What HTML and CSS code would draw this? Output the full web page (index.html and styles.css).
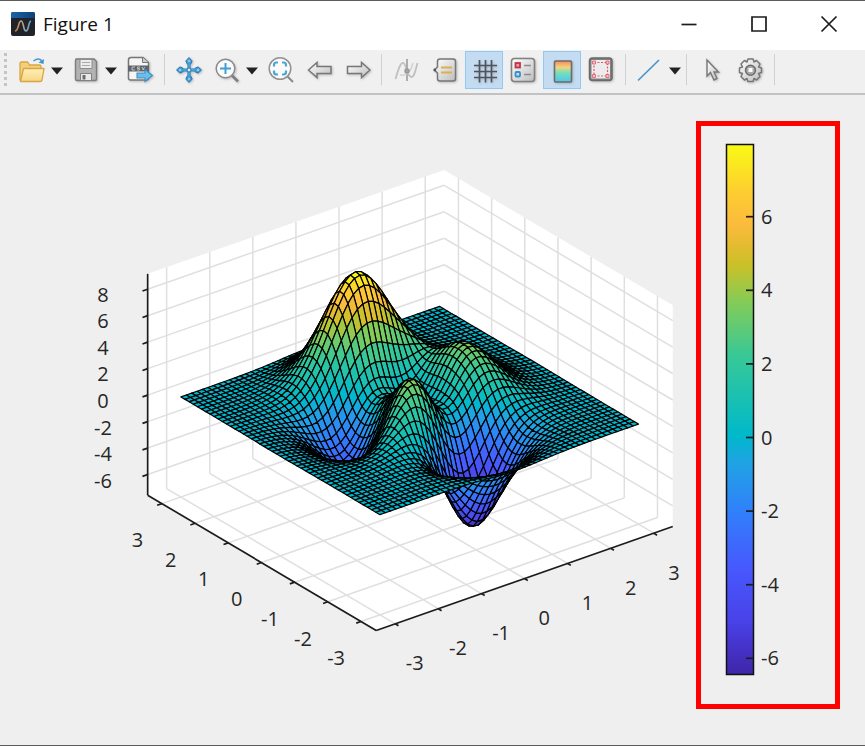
FILE: index.html
```html
<!DOCTYPE html>
<html lang="en">
<head>
<meta charset="utf-8">
<title>Figure 1</title>
<link rel="stylesheet" href="styles.css">
</head>
<body>
<div class="window">
  <header class="titlebar">
    <svg class="app-icon" viewBox="0 0 24 24" aria-hidden="true">
      <defs><linearGradient id="cap" x1="0" x2="1"><stop offset="0" stop-color="#1e64a8"/><stop offset="1" stop-color="#0c4276"/></linearGradient>
      <linearGradient id="wave" x1="0" x2="1"><stop offset="0" stop-color="#c8773a"/><stop offset=".45" stop-color="#b9a58a"/><stop offset="1" stop-color="#5aa3d8"/></linearGradient></defs>
      <rect width="24" height="24" rx="2" fill="#20242a"/>
      <path d="M0 6V2a2 2 0 0 1 2-2h20a2 2 0 0 1 2 2v4z" fill="url(#cap)"/>
      <path d="M4 19c4 0 3-10 6-10s2 10 5 10 2-9 5-10" fill="none" stroke="url(#wave)" stroke-width="1.6"/>
    </svg>
    <h1 class="title">Figure 1</h1>
    <div class="controls">
      <button class="control" aria-label="Minimize"><svg viewBox="0 0 18 18"><path d="M1.500 9.500h15"/></svg></button>
      <button class="control" aria-label="Maximize"><svg viewBox="0 0 18 18"><path d="M2 2h14v14H2z"/></svg></button>
      <button class="control" aria-label="Close"><svg viewBox="0 0 18 18"><path d="M1.500 1.500l15 15M16.500 1.500l-15 15"/></svg></button>
    </div>
  </header>

  <nav class="toolbar" aria-label="Figure tools">
    <span class="grip"></span>
    <div class="group">
      <div class="split">
        <button class="tool" aria-label="Open"><svg viewBox="0 0 28 28">
          <defs><linearGradient id="fold" x1="0" y1="0" x2="0" y2="1"><stop offset="0" stop-color="#fff0b8"/><stop offset="1" stop-color="#f7d683"/></linearGradient></defs>
          <path d="M2 24.500V7.500q0-1.500 1.500-1.500h6l2 3h10q1.500 0 1.500 1.500V13" fill="#f3cf7c" stroke="#d9a544" stroke-width="1.300"/>
          <path d="M2.500 25.500L5.500 12.500h20.500L24 24q-.3 1.500-1.800 1.500z" fill="url(#fold)" stroke="#d9a544" stroke-width="1.300" stroke-linejoin="round"/>
          <path d="M15.500 5q5-4 8.500 0" fill="none" stroke="#4a9bcd" stroke-width="1.600"/><path d="M26 3l-.5 5-5-1.500z" fill="#3f94c9"/>
        </svg></button>
        <button class="caret" aria-label="Open options"></button>
      </div>
      <div class="split">
        <button class="tool" aria-label="Save"><svg class="shaded" viewBox="0 0 28 28">
          <path d="M4.500 3h17.500l2.500 2.500v17.500q0 1.500-1.500 1.500h-18q-1.500 0-1.500-1.500V4.500q0-1.500 1-1.500z" fill="#b2b2b2" stroke="#7c7c7c" stroke-width="1.400"/>
          <path d="M8 3.500h12v9H8z" fill="#ececec" stroke="#8d8d8d"/><path d="M10 6.500h8M10 9.500h8" stroke="#aaa"/>
          <path d="M8.500 17.500h11v7h-11z" fill="#e9e9e9" stroke="#808080"/><path d="M10.500 19h3v4.500h-3z" fill="#6c6c6c"/>
        </svg></button>
        <button class="caret" aria-label="Save options"></button>
      </div>
      <button class="tool" aria-label="Export"><svg class="shaded" viewBox="0 0 28 28">
        <path d="M2.500 22V4q0-2.500 2.500-2.500h12l5.500 5V22q0 2-2 2h-16q-2 0-2-2z" fill="#f5f5f5" stroke="#777" stroke-width="1.500"/>
        <path d="M16.500 1.500v5h6" fill="#ccc" stroke="#777"/><path d="M2 9.500h21v6H2z" fill="#5f6468"/>
        <path d="M9 11H6v3h3M14 11h-2.500v1.500h2V14H11M16 11l1.200 3 1.300-3" fill="none" stroke="#ccc" stroke-width=".9"/>
        <path d="M11 17h8v-3.500l7.500 6-7.500 6V22h-8z" fill="#6dbcec" stroke="#3f8ec3" stroke-width="1.100"/>
      </svg></button>
    </div>
    <span class="sep"></span>
    <div class="group">
      <button class="tool" aria-label="Pan"><svg class="shaded" viewBox="0 0 28 28">
        <path d="M14 5v18M5 14h18" stroke="#2f80b8" stroke-width="3.200"/>
        <path d="M14 1.500l3.200 3.500-1.500 3h-3.400l-1.500-3zM14 26.500l3.200-3.500-1.500-3h-3.400l-1.500 3zM1.500 14l3.500-3.200 3 1.500v3.400l-3 1.500zM26.500 14l-3.500-3.200-3 1.500v3.400l3 1.500z" fill="#4a9fd6" stroke="#2877b0"/>
        <path d="M14 7v14M7 14h14" stroke="#4ba6df" stroke-width="1.600"/><circle cx="14" cy="14" r="2" fill="#d8ecf8" stroke="#2877b0"/>
        <path d="M14 4v2M14 22v2M4 14h2M22 14h2" stroke="#a9dbf7" stroke-width="1.300"/>
      </svg></button>
      <div class="split">
        <button class="tool" aria-label="Zoom in"><svg class="shaded" viewBox="0 0 28 28">
          <path d="M18.500 19l6.500 6.500" stroke="#808080" stroke-width="2.600"/><circle cx="12.500" cy="12.500" r="9.300" fill="#fafafa" stroke="#8b8b8b" stroke-width="1.500"/>
          <path d="M12.500 7v11M7 12.500h11" stroke="#3f9fd2" stroke-width="2"/>
        </svg></button>
        <button class="caret" aria-label="Zoom options"></button>
      </div>
      <button class="tool" aria-label="Fit to view"><svg viewBox="0 0 28 28">
        <path d="M20 20l6 6" stroke="#888" stroke-width="1.900"/><circle cx="13" cy="12.500" r="10.800" fill="#fafafa" stroke="#929292" stroke-width="1.500"/>
        <path d="M7 10.500V9q0-2.500 2.500-2.500h1.500M15 6.500h1.500q2.500 0 2.500 2.500v1.500M19 14.500v1.500q0 2.500-2.500 2.500H15M11 18.500H9.500Q7 18.500 7 16v-1.500" fill="none" stroke="#4aa5d3" stroke-width="2.200"/>
      </svg></button>
      <button class="tool" aria-label="Back"><svg class="shaded" viewBox="0 0 28 28">
        <defs><linearGradient id="metal" x1="0" y1="0" x2="1" y2="1"><stop offset="0" stop-color="#fff"/><stop offset="1" stop-color="#bdbdbd"/></linearGradient></defs>
        <path d="M3.500 14l8.500-7.500v4H26v7H12v4z" fill="url(#metal)" stroke="#777" stroke-width="1.500"/></svg></button>
      <button class="tool" aria-label="Forward"><svg class="shaded" viewBox="0 0 28 28"><path d="M27 14l-8.500-7.500v4H4.500v7h14v4z" fill="url(#metal)" stroke="#777" stroke-width="1.500"/></svg></button>
    </div>
    <span class="sep"></span>
    <div class="group spaced">
      <button class="tool" aria-label="Brush"><svg viewBox="0 0 28 28" fill="none" stroke="#c0c0c0" stroke-width="1.800">
        <path d="M3.500 23c3-10 5-17 8-16s3 14 8 14c3 0 4-7 6-14"/><path d="M15 3v22" stroke="#a5a5a5"/><path d="M8 19c6 1 11-3 13-12" stroke="#d2d2d2" stroke-width="1.500"/><circle cx="15" cy="15" r="1.800" stroke="#999" fill="#aaa"/></svg></button>
      <button class="tool" aria-label="Data tip"><svg class="shaded" viewBox="0 0 28 28">
        <path d="M9 3h13q2.500 0 2.500 2.500v17q0 2.500-2.500 2.500H9q-2.500 0-2.500-2.500V17L3.500 14l3-3V5.500Q6.500 3 9 3z" fill="url(#metal)" stroke="#777" stroke-width="1.500"/>
        <path d="M10 11.500h11M10 16.500h11" stroke="#dcb04c" stroke-width="1.800"/><circle cx="3.800" cy="14" r="1.400" fill="#555"/></svg></button>
      <button class="tool selected" aria-label="Grid" aria-pressed="true"><svg class="shaded" viewBox="0 0 28 28"><path d="M9.500 4v22.500M15.500 4v22.500M21.500 4v22.500M4 9.500h23M4 15.500h23M4 21.500h23" stroke="#4d545c" stroke-width="1.700"/></svg></button>
      <button class="tool" aria-label="Legend"><svg class="shaded" viewBox="0 0 28 28">
        <rect x="2.500" y="2.500" width="23" height="23" rx="3" fill="url(#metal)" stroke="#808080" stroke-width="1.600"/>
        <rect x="6.500" y="7" width="4.500" height="4.500" fill="#e8a0a8" stroke="#c03546" stroke-width="1.800"/><rect x="6.500" y="16" width="4.500" height="4.500" rx="1" fill="#bce3fa" stroke="#3290cb" stroke-width="1.800"/>
        <path d="M15 9.500h7M15 18.500h7" stroke="#8c8c8c" stroke-width="1.600"/></svg></button>
      <button class="tool selected" aria-label="Colorbar" aria-pressed="true"><svg class="shaded" viewBox="0 0 28 28">
        <defs><linearGradient id="cb" x1="0" y1="0" x2="0" y2="1"><stop offset="0" stop-color="#f48c5c"/><stop offset=".3" stop-color="#f5d27f"/><stop offset=".55" stop-color="#77dfb8"/><stop offset="1" stop-color="#4fc5ec"/></linearGradient></defs>
        <rect x="6.500" y="5" width="17" height="21" rx="1" fill="url(#cb)" stroke="#6c6c6c" stroke-width="1.600"/></svg></button>
      <button class="tool" aria-label="Plot tools"><svg class="shaded" viewBox="0 0 28 28">
        <rect x="2.500" y="2" width="22.500" height="22.500" rx="3" fill="#808080" stroke="#6a6a6a" stroke-width="1.500"/><rect x="4.500" y="4" width="18.500" height="18.500" fill="#ececec"/>
        <rect x="7" y="6.500" width="13.500" height="13.500" fill="none" stroke="#e05a6b" stroke-width="1.200" stroke-dasharray="2 1.500"/>
        <path d="M5.500 5h3v3h-3zM19 5h3v3h-3zM5.500 18.500h3v3h-3zM19 18.500h3v3h-3z" fill="#f5c4ca" stroke="#de5768" stroke-width=".8"/></svg></button>
    </div>
    <span class="sep"></span>
    <div class="group">
      <div class="split">
        <button class="tool" aria-label="Insert line"><svg viewBox="0 0 28 28"><path d="M2 24.500L23 4" stroke="#4a94c8" stroke-width="1.700"/></svg></button>
        <button class="caret" aria-label="Line options"></button>
      </div>
    </div>
    <span class="sep"></span>
    <div class="group spaced">
      <button class="tool" aria-label="Select"><svg class="shaded" viewBox="0 0 28 28"><path d="M10 4v16l3.500-3.500 3.500 7.500 3-1.500-3-6.500h4.500z" fill="url(#metal)" stroke="#777" stroke-width="1.400"/></svg></button>
      <button class="tool" aria-label="Settings"><svg class="shaded" viewBox="0 0 28 28">
        <path d="M12 3h5l1 3 2.500-1.500 3.500 3.500-1.500 3 3 1v4.500l-3 1 1.500 3-3.500 3.500L18 22.500l-1 3h-5l-1-3L8.500 24 5 20.500l1.500-3-3-1V12l3-1L5 8l3.500-3.500L11 6z" fill="url(#metal)" stroke="#777" stroke-width="1.500" stroke-linejoin="round"/>
        <circle cx="14.500" cy="14.200" r="5" fill="#a9a9a9" stroke="#6c6c6c" stroke-width="1.500"/><rect x="12.500" y="12" width="4" height="4" fill="#fff"/></svg></button>
    </div>
    <span class="sep"></span>
  </nav>

  <main class="figure">
    <svg class="axes" viewBox="0 95 696 649" role="img" aria-label="Surface plot of peaks">
      <g id="walls"></g>
      <g id="grid"></g>
      <g id="axis"></g>
      <g id="surface"></g>
      <g id="labels"></g>
    </svg>
    <aside class="legend">
      <svg class="colorbar" viewBox="0 0 134 578" role="img" aria-label="Color scale">
        <defs><linearGradient id="parula" x1="0" y1="1" x2="0" y2="0"></linearGradient></defs>
        <rect x="25.500" y="18.500" width="27" height="530" fill="url(#parula)" stroke="#111" stroke-width="1.500"/>
        <g id="bar-ticks"></g>
      </svg>
    </aside>
  </main>
</div>
<script src="plot.js"></script>
</body>
</html>
```
FILE: styles.css
```css
* { box-sizing: border-box; }

body {
  margin: 0;
  background: #f0f0f0;
  color: #222;
  font-family: "Open Sans", "Noto Sans", sans-serif;
}

.window {
  display: flex;
  flex-direction: column;
  min-height: 100vh;
  border-top: 1px solid #5c5c5c;
  border-bottom: 1px solid #5c5c5c;
}

.titlebar {
  display: flex;
  align-items: center;
  height: 49px;
  padding: 0 1px 4px 11px;
  background: #fff;
}

.app-icon { width: 24px; height: 24px; }

.title {
  flex: 1;
  margin: 0 0 0 8px;
  font-size: 19px;
  font-weight: 400;
  line-height: 24px;
  color: #111;
}

.controls { display: flex; }

button {
  padding: 0;
  border: 0;
  background: none;
}

.control {
  display: grid;
  place-items: center;
  width: 70px;
  height: 44px;
}

.control svg {
  width: 18px;
  height: 18px;
  fill: none;
  stroke: #1c1c1c;
  stroke-width: 1.700;
}

.toolbar {
  display: flex;
  align-items: center;
  height: 45px;
  padding: 0 0 4px 4px;
  border-bottom: 2px solid #c2c2c2;
}

.grip {
  width: 3px;
  height: 34px;
  margin-right: 6px;
  background: repeating-linear-gradient(#c4c4c4 0 3px, transparent 3px 6px);
}

.group, .split { display: flex; align-items: center; }
.spaced { gap: 1px; }
.split { margin-right: 4px; }
.split:last-child { margin-right: 0; }

.tool {
  display: grid;
  place-items: center;
  width: 38px;
  height: 38px;
  border: 1px solid transparent;
}

.tool svg { width: 28px; height: 28px; }
.shaded { filter: drop-shadow(1px 1px 1px #9999); }
.selected { background: #c3dcf2; border-color: #90c8f6; }

.caret {
  width: 12px;
  height: 38px;
  background: #222;
  clip-path: polygon(0 17px, 100% 17px, 50% 24px);
}

.sep {
  width: 1px;
  height: 31px;
  margin: 0 5px;
  background: #d0d0d0;
}

.figure {
  flex: 1;
  display: flex;
  align-items: flex-start;
  padding-right: 25px;
  background: #efefef;
}

.axes {
  flex: 1;
  min-width: 0;
}

.legend {
  width: 144px;
  margin-top: 26px;
  border: 5px solid #f00;
}

.colorbar, .axes { display: block; }
.colorbar { width: 100%; }

text {
  font-size: 20px;
  fill: #262626;
}

.wall { fill: #fff; }
.grid-line { stroke: #dfdfdf; stroke-width: 1.500; }
.axis-line { stroke: #1c1c1c; stroke-width: 1.700; }
.tick { stroke: #1c1c1c; stroke-width: 1.700; }
.cell { stroke: #000; stroke-width: 1.200; stroke-linejoin: round; }
.centered { text-anchor: middle; }
```
FILE: plot.js
```js
const NS = 'http://www.w3.org/2000/svg';
const XMIN = -3.44, XMAX = 3.44, YMIN = -3.46, YMAX = 3.43, ZMIN = -7.56, ZMAX = 9.16;
const CMIN = -6.466, CMAX = 8;

const PARULA = [
  [0, 62, 38, 168], [0.05, 69, 50, 200], [0.1, 72, 66, 232], [0.2, 71, 88, 253],
  [0.3, 50, 125, 252], [0.4, 32, 163, 228], [0.45, 0, 184, 204], [0.5, 18, 190, 185],
  [0.6, 55, 200, 151], [0.7, 129, 204, 89], [0.77, 200, 193, 41], [0.81, 228, 187, 48],
  [0.85, 252, 187, 61], [0.91, 253, 205, 48], [1, 249, 251, 21]
];

function color(t) {
  t = Math.max(0, Math.min(1, t));
  let k = 1;
  while (k < PARULA.length - 1 && PARULA[k][0] < t) k++;
  const a = PARULA[k - 1], b = PARULA[k], f = (t - a[0]) / (b[0] - a[0]);
  return 'rgb(' + [1, 2, 3].map(i => Math.round(a[i] + (b[i] - a[i]) * f)).join() + ')';
}

// Orthographic projection of data space onto the drawing
function project(x, y, z) {
  return [409.7 + 43.1 * x - 33.17 * y, 410.5 - 15.1 * x - 19.63 * y - 13.24 * z];
}

function add(parent, name, attrs, text) {
  const el = document.createElementNS(NS, name);
  for (const key in attrs) el.setAttribute(key, attrs[key]);
  if (text !== undefined) el.textContent = text;
  document.getElementById(parent).appendChild(el);
}

const poly = (parent, pts, attrs) =>
  add(parent, 'polygon', { points: pts.map(p => p.map(n => n.toFixed(2)).join()).join(' '), ...attrs });
const line = (parent, a, b, cls) =>
  add(parent, 'line', { x1: a[0], y1: a[1], x2: b[0], y2: b[1], class: cls });

function peaks(x, y) {
  return 3 * (1 - x) ** 2 * Math.exp(-x * x - (y + 1) ** 2)
    - 10 * (x / 5 - x ** 3 - y ** 5) * Math.exp(-x * x - y * y)
    - Math.exp(-((x + 1) ** 2) - y * y) / 3;
}

const P = project;
poly('walls', [P(XMIN, YMAX, ZMAX), P(XMAX, YMAX, ZMAX), P(XMAX, YMIN, ZMAX),
  P(XMAX, YMIN, ZMIN), P(XMIN, YMIN, ZMIN), P(XMIN, YMAX, ZMIN)], { class: 'wall' });

for (let v = -3; v <= 3; v++) {
  line('grid', P(v, YMIN, ZMIN), P(v, YMAX, ZMIN), 'grid-line');
  line('grid', P(v, YMAX, ZMIN), P(v, YMAX, ZMAX), 'grid-line');
  line('grid', P(XMIN, v, ZMIN), P(XMAX, v, ZMIN), 'grid-line');
  line('grid', P(XMAX, v, ZMIN), P(XMAX, v, ZMAX), 'grid-line');
  line('axis', P(v, YMIN, ZMIN), P(v, YMIN - 0.1, ZMIN), 'tick');
  line('axis', P(XMIN, v, ZMIN), P(XMIN - 0.11, v, ZMIN), 'tick');
  add('labels', 'text', { x: 414.7 + 43.2 * (v + 3), y: 669.5 - 15 * (v + 3), class: 'centered' }, v);
  add('labels', 'text', { x: 137.5 + 33.1 * (3 - v), y: 547 + 19.7 * (3 - v), class: 'centered' }, v);
}
for (let v = -6; v <= 8; v += 2) {
  line('grid', P(XMIN, YMAX, v), P(XMAX, YMAX, v), 'grid-line');
  line('grid', P(XMAX, YMAX, v), P(XMAX, YMIN, v), 'grid-line');
  line('axis', P(XMIN, YMAX, v), P(XMIN - 0.12, YMAX, v), 'tick');
  add('labels', 'text', { x: 103, y: 408 - 13.3 * v, class: 'centered' }, v);
}
line('axis', P(XMIN, YMAX, ZMIN), P(XMIN, YMAX, ZMAX), 'axis-line');
line('axis', P(XMIN, YMAX, ZMIN), P(XMIN, YMIN, ZMIN), 'axis-line');
line('axis', P(XMIN, YMIN, ZMIN), P(XMAX, YMIN, ZMIN), 'axis-line');

// Cells are painted from the far corner to the near one
const N = 48, at = i => -3 + i / 8;
for (let i = N - 1; i >= 0; i--) {
  for (let j = N - 1; j >= 0; j--) {
    const pts = [[i, j], [i + 1, j], [i + 1, j + 1], [i, j + 1]]
      .map(([a, b]) => P(at(a), at(b), peaks(at(a), at(b))));
    const c = (peaks(at(i), at(j)) - CMIN) / (CMAX - CMIN);
    poly('surface', pts, { class: 'cell', fill: color(c) });
  }
}

for (const s of PARULA) add('parula', 'stop', { offset: s[0], 'stop-color': color(s[0]) });
for (let v = -6; v <= 6; v += 2) {
  const y = 311.5 - 36.8 * v;
  line('bar-ticks', [45, y], [52, y], 'tick');
  add('bar-ticks', 'text', { x: 60, y: y + 7 }, v);
}
```
